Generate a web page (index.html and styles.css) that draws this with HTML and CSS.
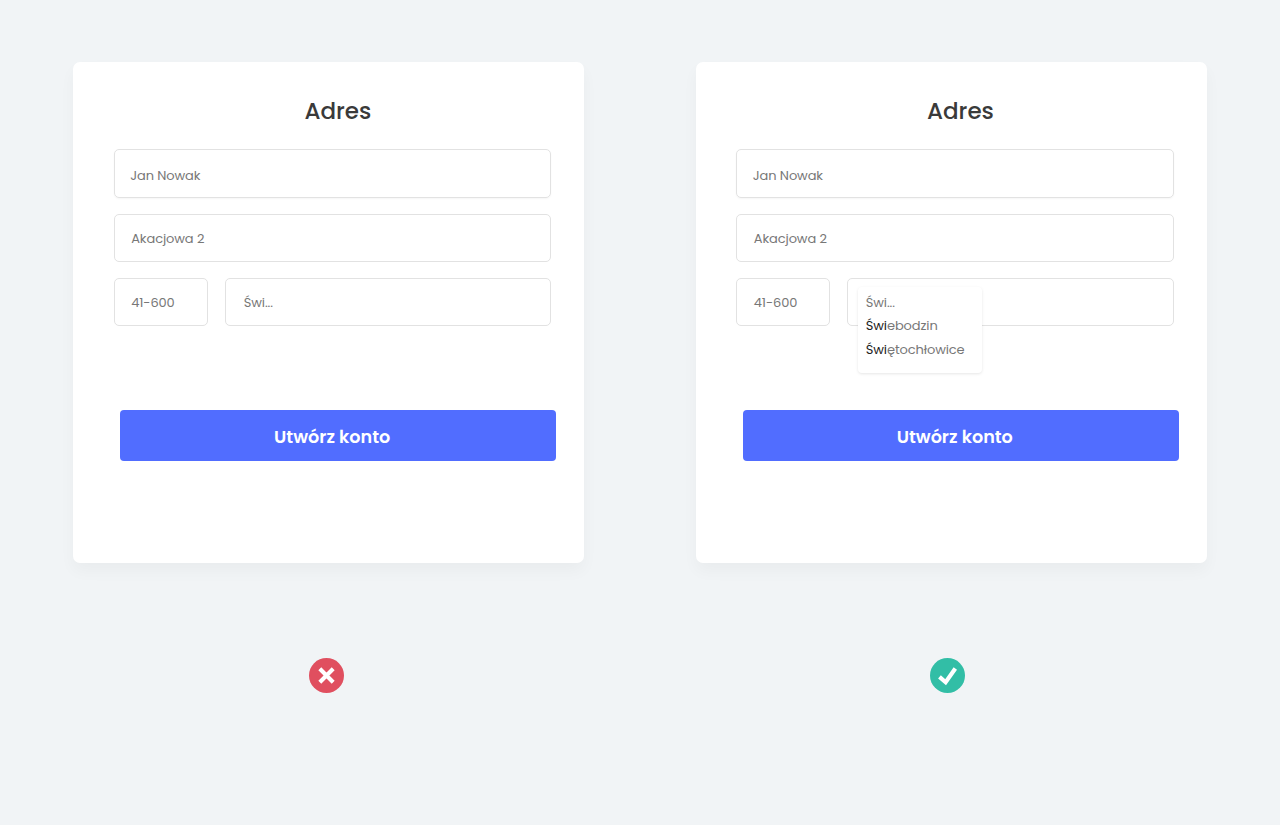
FILE: index.html
```html
<!DOCTYPE html>
<html lang="pl">
<head>
    <meta charset="UTF-8">
    <meta name="viewport" content="width=device-width, initial-scale=1.0">
    <title>Adres</title>
    <link rel="stylesheet" href="styles.css">
</head>
<body>

<main class="comparison">
    <section class="example">
        <div class="card">
            <h1>Adres</h1>
            <div class="fields">
                <div class="field field-name">Jan Nowak</div>
                <div class="field">Akacjowa 2</div>
                <div class="field-row">
                    <div class="field field-code">41-600</div>
                    <div class="field field-city">Świ...</div>
                </div>
            </div>
            <button type="button">Utwórz konto</button>
        </div>
        <svg class="status status-bad" viewBox="0 0 34 34">
            <circle cx="17" cy="17" r="17" fill="#e04f5f"/>
            <path d="M10.5 10.5L23.5 23.5M23.5 10.5L10.5 23.5" fill="none" stroke="#fff" stroke-width="4"/>
        </svg>
    </section>

    <section class="example">
        <div class="card">
            <h1>Adres</h1>
            <div class="fields">
                <div class="field field-name">Jan Nowak</div>
                <div class="field">Akacjowa 2</div>
                <div class="field-row">
                    <div class="field field-code">41-600</div>
                    <div class="field field-city">
                        <ul class="suggestions">
                            <li>Świ...</li>
                            <li><b>Świ</b>ebodzin</li>
                            <li><b>Świ</b>ętochłowice</li>
                        </ul>
                    </div>
                </div>
            </div>
            <button type="button">Utwórz konto</button>
        </div>
        <svg class="status status-good" viewBox="0 0 34 34">
            <circle cx="17" cy="17" r="17" fill="#32bea6"/>
            <path d="M9.2 18.3L15.2 23.6L24.6 10.2" fill="none" stroke="#fff" stroke-width="4"/>
        </svg>
    </section>
</main>

</body>
</html>
```
FILE: styles.css
```css
* {
    box-sizing: border-box;
}

body {
    font-family: Poppins, Inter, sans-serif;
    margin: 0;
    min-height: 100vh;
    background-color: #f1f4f6;
    color: #777;
}

.comparison {
    display: flex;
    gap: 111.6px;
    padding: 62px 73px 0;
}

.example {
    width: 511px;
}

.card {
    height: 501px;
    padding: 31px 33px 0 40.7px;
    background-color: #fff;
    border-radius: 7px;
    box-shadow: 0 8px 16px rgba(0, 0, 0, 0.035);
}

h1 {
    margin: 0 0 20px;
    padding-left: 11px;
    height: 36px;
    font-size: 23px;
    font-weight: 500;
    line-height: 36px;
    text-align: center;
    color: #3a3a3a;
}

.fields {
    display: flex;
    flex-direction: column;
    gap: 16px;
}

.field {
    display: flex;
    align-items: center;
    height: 48px;
    padding: 2px 16.5px 0;
    border: 1px solid #e2e2e2;
    border-radius: 5px;
    font-size: 13px;
    letter-spacing: -0.1px;
    white-space: nowrap;
}

.field-name {
    height: 49px;
    padding-top: 4px;
    padding-left: 15.5px;
    box-shadow: 0 1px 2px rgba(0, 0, 0, 0.04);
}

.field-row {
    display: flex;
    gap: 17px;
}

.field-code {
    width: 94px;
}

.field-city {
    position: relative;
    flex: 1;
    padding-left: 18px;
}

.suggestions {
    position: absolute;
    top: 8px;
    left: 9.9px;
    width: 124px;
    height: 86px;
    margin: 0;
    padding: 4px 7.6px;
    list-style: none;
    background-color: #fff;
    border-radius: 4px;
    box-shadow: 0 1px 3px rgba(0, 0, 0, 0.1);
    line-height: 23.3px;
}

.suggestions b {
    font-weight: 400;
    color: #222;
}

button {
    display: block;
    width: 436px;
    height: 51px;
    margin: 84px 0 0 6.5px;
    padding: 3px 12px 0 0;
    border: none;
    border-radius: 4px;
    background-color: #516dff;
    color: #fff;
    font-family: inherit;
    font-size: 17.6px;
    font-weight: 600;
    cursor: pointer;
}

.status {
    display: block;
    width: 35px;
    height: 35px;
    margin-top: 95px;
}

.status-bad {
    margin-left: 236px;
}

.status-good {
    margin-left: 234px;
}
```
